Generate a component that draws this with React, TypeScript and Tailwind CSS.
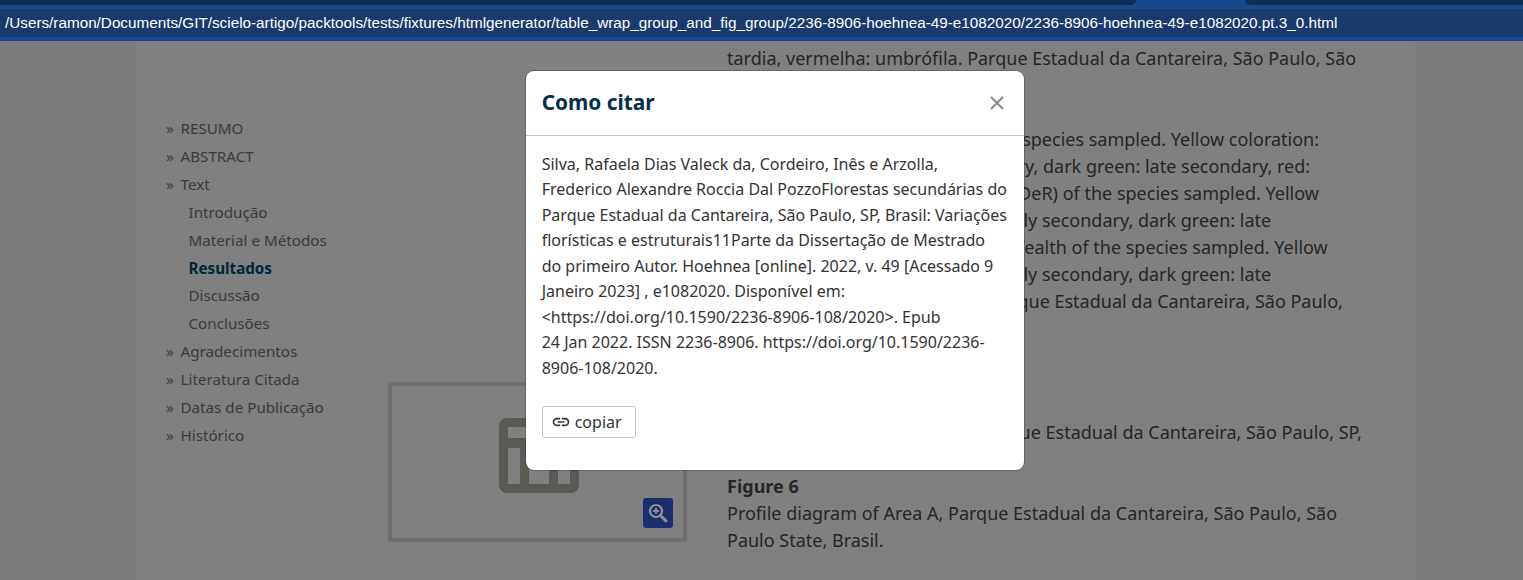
import { MdLink } from 'react-icons/md';

const sideItems = [
  { label: 'RESUMO', top: true },
  { label: 'ABSTRACT', top: true },
  { label: 'Text', top: true },
  { label: 'Introdução' },
  { label: 'Material e Métodos' },
  { label: 'Resultados', active: true },
  { label: 'Discussão' },
  { label: 'Conclusões' },
  { label: 'Agradecimentos', top: true },
  { label: 'Literatura Citada', top: true },
  { label: 'Datas de Publicação', top: true },
  { label: 'Histórico', top: true },
];

function Sidebar() {
  return (
    <ul className="w-[222px] shrink-0 pt-[74px] pl-[31px] text-[15.2px] leading-[27.9px] text-[#3b3b3b]">
      {sideItems.map((item) => (
        <li key={item.label} className={item.top ? 'flex' : 'pl-[22.5px]'}>
          {item.top && <span className="w-[14.5px]">»</span>}
          <span className={item.active ? 'font-bold text-[#02263a]' : ''}>{item.label}</span>
        </li>
      ))}
    </ul>
  );
}

function TableThumb() {
  return (
    <div className="relative mt-[341px] w-[299px] h-[160px] shrink-0 border-4 border-[#6f6f6f] rounded-[2px] flex items-start justify-center">
      <svg width="80" height="75" viewBox="0 0 80 75" className="mt-[32px] ml-[3px]">
        <path
          fillRule="evenodd"
          fill="#5a5a55"
          d="M8 0h64a8 8 0 0 1 8 8v59a8 8 0 0 1-8 8H8a8 8 0 0 1-8-8V8a8 8 0 0 1 8-8zM9 9v11h62V9zM9 30v36h12V30zM30 30v36h20V30zM59 30v36h12V30z"
        />
      </svg>
      <button className="absolute right-[10px] bottom-[10px] w-[30px] h-[30px] rounded-[3px] bg-[#1b2f6e] flex items-center justify-center">
        <svg width="20" height="20" viewBox="0 0 20 20" fill="none" stroke="#8f8f8f">
          <circle cx="8" cy="8" r="6" strokeWidth="2.2" />
          <path d="M12.5 12.5L18 18" strokeWidth="3" strokeLinecap="round" />
          <path d="M8 5v6M5 8h6" strokeWidth="1.8" />
        </svg>
      </button>
    </div>
  );
}

function ArticleText() {
  return (
    <div className="ml-[40px] w-[640px] pt-[4px] text-[18px] leading-[27px] text-[#262626]">
      <p>tardia, vermelha: umbrófila. Parque Estadual da Cantareira, São Paulo, São</p>
      <p>Paulo State, Brasil.</p>
      <p className="font-bold">Figure 4</p>
      <p className="whitespace-nowrap">Ecological Wealth (DeR) of the tree species sampled. Yellow coloration:</p>
      <p className="whitespace-nowrap">pioneer, light green: early secondary, dark green: late secondary, red:</p>
      <p className="whitespace-nowrap">umbrophilous.&nbsp; Ecological Wealth (DeR) of the species sampled. Yellow</p>
      <p className="whitespace-nowrap">coloration: pioneer, light green: early secondary, dark green: late</p>
      <p className="whitespace-nowrap">secondary, tan: shrub. Ecological Wealth of the species sampled. Yellow</p>
      <p className="whitespace-nowrap">coloration: pioneer, light green: early secondary, dark green: late</p>
      <p className="whitespace-nowrap">secondary, red: umbrophilous. Parque Estadual da Cantareira, São Paulo,</p>
      <p>São Paulo State, Brasil.</p>
      <div className="h-[50px]" />
      <p className="font-bold">Figure 5</p>
      <p className="whitespace-nowrap">Profile diagram of the Area B, Parque Estadual da Cantareira, São Paulo, SP,</p>
      <p>Brasil.</p>
      <p className="font-bold">Figure 6</p>
      <p>Profile diagram of Area A, Parque Estadual da Cantareira, São Paulo, São</p>
      <p>Paulo State, Brasil.</p>
    </div>
  );
}

function CiteModal() {
  return (
    <div className="absolute left-[525px] top-[70px] w-[500px] h-[401px] bg-white bg-clip-padding border border-black/20 rounded-[9px] flex flex-col">
      <div className="h-[65px] shrink-0 border-b border-[#c4c4c4] pl-[15.7px] pr-[16px] flex items-center justify-between">
        <h2 className="text-[20.8px] font-bold text-[#00314c]">Como citar</h2>
        <svg width="14" height="14" viewBox="0 0 14 14" className="mr-[4px]" stroke="#8a8a8a" strokeWidth="2">
          <path d="M1 1l12 12M13 1L1 13" />
        </svg>
      </div>
      <div className="pl-[15.7px] pr-[16px] pt-[15.5px] text-[16px] leading-[25.5px] text-[#333333]">
        <p>
          Silva, Rafaela Dias Valeck da, Cordeiro, Inês e Arzolla, Frederico Alexandre Roccia Dal PozzoFlorestas
          secundárias do Parque Estadual da Cantareira, São Paulo, SP, Brasil: Variações florísticas e
          estruturais11Parte da Dissertação de Mestrado do primeiro Autor. Hoehnea [online]. 2022, v. 49 [Acessado 9
          Janeiro 2023] , e1082020. Disponível em: &lt;https://doi.org/10.1590/2236-8906-108/2020&gt;. Epub
          <br />
          24 Jan 2022. ISSN 2236-8906. https://doi.org/10.1590/2236-8906-108/2020.
        </p>
        <button className="mt-[25px] h-[32px] w-[94px] border border-[#c4c4c4] rounded-[3px] flex items-center pl-[8px] gap-[4px] text-[#333333]">
          <MdLink size={20} />
          <span className="pt-[2px]">copiar</span>
        </button>
      </div>
    </div>
  );
}

export default function App() {
  return (
    <div
      className="relative w-[1523px] h-[580px] overflow-hidden bg-[#7c7c7c]"
      style={{ fontFamily: '"Noto Sans", sans-serif' }}
    >
      <div className="h-[41px] bg-[#164a8c] relative">
        <div className="h-[5px] flex">
          <div className="w-[1136px] bg-[#122c55] rounded-br-[5px]" />
          <div className="w-[109px]" />
          <div className="flex-1 bg-[#122c55] rounded-bl-[5px]" />
        </div>
        <div
          className="mt-[4px] h-[28px] bg-[#1a3a6e] pl-[5px] text-[15.28px] leading-[28px] text-white whitespace-nowrap"
          style={{ fontFamily: '"Liberation Sans", sans-serif' }}
        >
          /Users/ramon/Documents/GIT/scielo-artigo/packtools/tests/fixtures/htmlgenerator/table_wrap_group_and_fig_group/2236-8906-hoehnea-49-e1082020/2236-8906-hoehnea-49-e1082020.pt.3_0.html
        </div>
      </div>
      <div className="w-[1280px] h-[539px] ml-[135px] bg-[#808080] flex overflow-hidden">
        <Sidebar />
        <div className="ml-[31px] flex">
          <TableThumb />
          <ArticleText />
        </div>
      </div>
      <CiteModal />
    </div>
  );
}
